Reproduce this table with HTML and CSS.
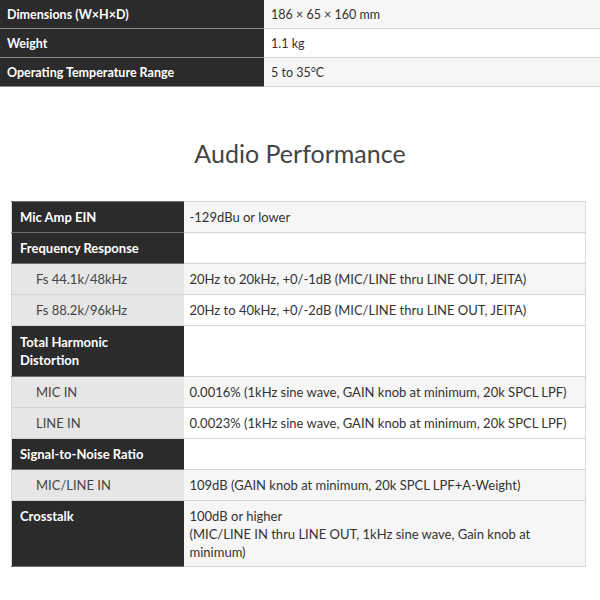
FILE: index.html
```html
<!DOCTYPE html>
<html lang="en">
<head>
<meta charset="utf-8">
<title>Specifications</title>
<link rel="stylesheet" href="styles.css">
</head>
<body>
<table class="spec spec-top">
  <colgroup><col class="col-head"><col></colgroup>
  <tr class="alt"><th>Dimensions (W×H×D)</th><td>186 × 65 × 160 mm</td></tr>
  <tr><th>Weight</th><td>1.1 kg</td></tr>
  <tr class="alt"><th>Operating Temperature Range</th><td>5 to 35°C</td></tr>
</table>

<h2 class="section-title">Audio Performance</h2>

<table class="spec spec-main">
  <colgroup><col class="col-head"><col></colgroup>
  <tr class="alt"><th>Mic Amp EIN</th><td>-129dBu or lower</td></tr>
  <tr><th>Frequency Response</th><td></td></tr>
  <tr class="alt sub"><th>Fs 44.1k/48kHz</th><td>20Hz to 20kHz, +0/-1dB (MIC/LINE thru LINE OUT, JEITA)</td></tr>
  <tr class="sub"><th>Fs 88.2k/96kHz</th><td>20Hz to 40kHz, +0/-2dB (MIC/LINE thru LINE OUT, JEITA)</td></tr>
  <tr class="tall"><th>Total Harmonic<br>Distortion</th><td></td></tr>
  <tr class="alt sub"><th>MIC IN</th><td>0.0016% (1kHz sine wave, GAIN knob at minimum, 20k SPCL LPF)</td></tr>
  <tr class="sub"><th>LINE IN</th><td>0.0023% (1kHz sine wave, GAIN knob at minimum, 20k SPCL LPF)</td></tr>
  <tr><th>Signal-to-Noise Ratio</th><td></td></tr>
  <tr class="alt sub"><th>MIC/LINE IN</th><td>109dB (GAIN knob at minimum, 20k SPCL LPF+A-Weight)</td></tr>
  <tr class="alt"><th>Crosstalk</th><td>100dB or higher<br>(MIC/LINE IN thru LINE OUT, 1kHz sine wave, Gain knob at minimum)</td></tr>
</table>
</body>
</html>
```

FILE: styles.css
```css
html, body {
  margin: 0;
  padding: 0;
  background: #ffffff;
}
body {
  font-family: Lato, "Open Sans", sans-serif;
  color: #333333;
}
.spec {
  border-collapse: collapse;
  table-layout: fixed;
  font-size: 13px;
  line-height: 18px;
}
.spec th,
.spec td {
  text-align: left;
  vertical-align: top;
  border-top: 1px solid #d4d4d4;
  border-bottom: 1px solid #d4d4d4;
}
.spec th {
  background: #2b2b2b;
  color: #ffffff;
  font-weight: 700;
}
.spec td {
  background: #ffffff;
  color: #333333;
}
.spec tr.alt td {
  background: #f6f6f6;
}

/* top table */
.spec-top {
  width: 600px;
  margin-top: -1px;
  font-size: 12.5px;
  line-height: 17px;
}
.spec-top .col-head {
  width: 264px;
}
.spec-top th {
  padding: 6px 7px 5px;
  border-color: #8a8a8a;
}
.spec-top td {
  padding: 6px 7px 5px;
}

.section-title {
  margin: 51px 0 33px;
  text-align: center;
  font-weight: 400;
  font-size: 25px;
  line-height: 30px;
  color: #444444;
}

/* main table */
.spec-main {
  width: 575px;
  margin-left: 11px;
  border: 1px solid #d8d8d8;
}
.spec-main .col-head {
  width: 172px;
}
.spec-main th {
  padding: 6px 8px 6px;
  border-color: #6f6f6f;
}
.spec-main td {
  padding: 6px 6px 6px;
  border-right: 1px solid #d8d8d8;
}
.spec-main tr.tall th {
  padding-top: 7px;
  padding-bottom: 7px;
}
.spec-main tr.sub th {
  background: #e6e6e6;
  color: #444444;
  font-weight: 400;
  padding-left: 24px;
  border-color: #d4d4d4;
}
.spec-main tr:last-child td {
  padding-bottom: 5px;
}
```
